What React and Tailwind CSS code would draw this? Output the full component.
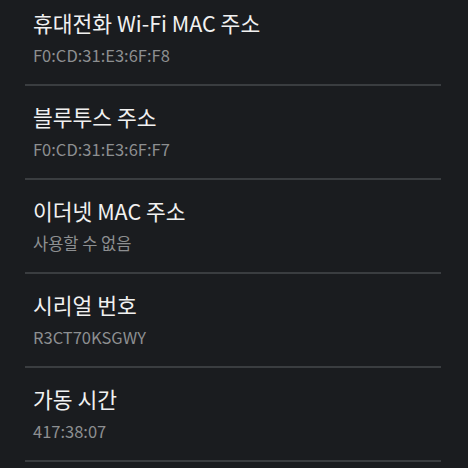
const items = [
    {title: "휴대전화 Wi-Fi MAC 주소", value: "F0:CD:31:E3:6F:F8"},
    {title: "블루투스 주소", value: "F0:CD:31:E3:6F:F7"},
    {title: "이더넷 MAC 주소", value: "사용할 수 없음"},
    {title: "시리얼 번호", value: "R3CT70KSGWY"},
    {title: "가동 시간", value: "417:38:07"},
];


const InfoRow = ({title, value, first}) => {
    return (
        <div>
            <div className={first ? "pl-2 pt-[9px] pb-[17px]" : "pl-2 pt-[17px] pb-[17px]"}>
                <p className="text-[21.5px] leading-[28px] text-[#f1f1f1]">{title}</p>
                <p className="text-[16.5px] leading-[24px] text-[#8d8f91] mt-[6px]">{value}</p>
            </div>
            <div className="h-[2px] bg-[#3a3d40]" />
        </div>
    );
};


export default function App() {
    return (
        <div
            className="w-[468px] h-[468px] overflow-hidden bg-[#1a1c1f] pl-[25px] pr-[27px]"
            style={{fontFamily: '"Noto Sans CJK KR", "Noto Sans", sans-serif'}}
        >
            {items.map((item, i) => (
                <InfoRow key={i} title={item.title} value={item.value} first={i === 0} />
            ))}
        </div>
    );
}
